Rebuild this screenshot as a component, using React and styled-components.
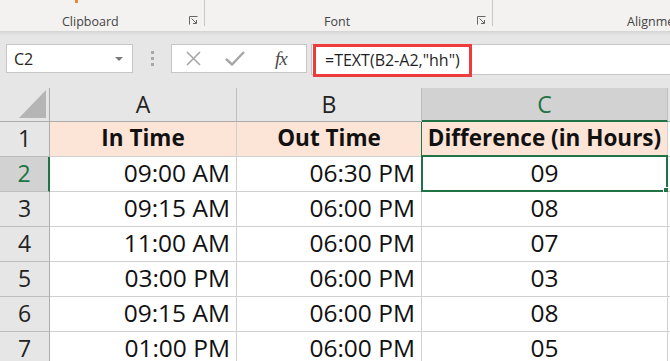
import { styled, createGlobalStyle } from "styled-components";

const GlobalStyle = createGlobalStyle`
    html, body {
        margin: 0;
        padding: 0;
        background: #ffffff;
        font-family: "Open Sans", "Noto Sans", sans-serif;
    }
`

const Screen = styled.div`
    width: 670px;
    height: 361px;
    overflow: hidden;
    display: flex;
    flex-direction: column;
    background: #e6e6e6;
`

const Ribbon = styled.div`
    display: flex;
    height: 32px;
    flex-shrink: 0;
    background: #f3f2f1;
    border-bottom: 1px solid #d6d6d6;
    box-sizing: border-box;
`

const Group = styled.div`
    position: relative;
    display: flex;
    align-items: flex-end;
    width: ${props => props.$width}px;
    padding-left: ${props => props.$labelAt}px;
    padding-bottom: 1px;
    box-sizing: border-box;
    flex-shrink: 0;

    &::after {
        content: "";
        display: ${props => (props.$last ? "none" : "block")};
        position: absolute;
        right: 0;
        top: 0;
        width: 1px;
        height: 26px;
        background: #c8c8c8;
    }
`

const GroupLabel = styled.span`
    font-size: 12.5px;
    color: #444444;
    line-height: 16px;
`

const Launcher = styled.svg`
    position: absolute;
    right: 7px;
    bottom: 6px;
`

const PasteTip = styled.div`
    position: absolute;
    left: 75px;
    top: 0;
    width: 3px;
    height: 3px;
    background: #e8883a;
`

const FormulaArea = styled.div`
    display: flex;
    align-items: flex-start;
    height: 56px;
    flex-shrink: 0;
    padding: 12px 0 0 6px;
    box-sizing: border-box;
    background: linear-gradient(#dadada 0, #e6e6e6 4px, #e6e6e6 100%);
`

const NameBox = styled.div`
    display: flex;
    align-items: center;
    justify-content: space-between;
    width: 127px;
    height: 29px;
    padding: 0 9px 0 7px;
    box-sizing: border-box;
    background: #ffffff;
    border: 1px solid #c6c6c6;
    font-size: 16px;
    color: #262626;
`

const Caret = styled.span`
    width: 0;
    height: 0;
    border-left: 4px solid transparent;
    border-right: 4px solid transparent;
    border-top: 4px solid #7a7a7a;
`

const Grip = styled.div`
    display: flex;
    flex-direction: column;
    gap: 3px;
    width: 38px;
    height: 29px;
    align-items: center;
    justify-content: center;

    span {
        width: 3px;
        height: 3px;
        background: #a8a8a8;
    }
`

const FxBox = styled.div`
    display: flex;
    align-items: center;
    width: 136px;
    height: 29px;
    box-sizing: border-box;
    background: #ffffff;
    border: 1px solid #c6c6c6;
    padding-left: 14px;
    gap: 24px;
`

const Fx = styled.span`
    font-family: "Liberation Serif", "DejaVu Serif", serif;
    font-style: italic;
    font-size: 19px;
    color: #4a4a4a;
    margin-left: 6px;
    letter-spacing: -1px;
`

const FormulaInput = styled.div`
    position: relative;
    flex: 1;
    height: 29px;
    margin-left: 4px;
    background: #ffffff;
    border: 1px solid #c6c6c6;
    border-right: none;
    display: flex;
    align-items: center;
    padding-left: 13px;
    font-size: 16px;
    color: #1f1f1f;
`

const Highlight = styled.div`
    position: absolute;
    left: 1px;
    top: -1px;
    width: 159px;
    height: 33px;
    border: 3px solid #ee3b3b;
    box-sizing: border-box;
`

const Sheet = styled.div`
    display: grid;
    grid-template-columns: 50px 187px 185px 246px 1fr;
    grid-template-rows: 34px;
    grid-auto-rows: 35px;
    background: #ffffff;
`

const Cell = styled.div`
    position: relative;
    display: flex;
    align-items: center;
    justify-content: ${props => props.$align || "flex-end"};
    padding: 0 6px 3px 6px;
    box-sizing: border-box;
    border-right: 1px solid ${props => props.$rightColor || "#d0d0d0"};
    border-bottom: 1px solid #d0d0d0;
    font-size: ${props => (props.$bold ? "22.5px" : "24.5px")};
    font-weight: ${props => (props.$bold ? 700 : 400)};
    color: #111111;
    background: ${props => props.$fill || "#ffffff"};
    white-space: nowrap;
`

const HeaderCell = styled.div`
    display: flex;
    align-items: center;
    justify-content: center;
    padding-bottom: 1px;
    box-sizing: border-box;
    font-size: 23px;
    background: ${props => (props.$active ? "#d2d2d2" : "#e6e6e6")};
    color: ${props => (props.$active ? "#217346" : "#222222")};
    border-right: 1px solid #bdbdbd;
    border-bottom: ${props => (props.$active ? "2px solid #217346" : "1px solid #ababab")};
`

const RowHead = styled.div`
    display: flex;
    align-items: center;
    justify-content: center;
    padding-bottom: 3px;
    box-sizing: border-box;
    font-size: 23px;
    background: ${props => (props.$active ? "#d2d2d2" : "#e6e6e6")};
    color: ${props => (props.$active ? "#217346" : "#222222")};
    border-bottom: 1px solid #bdbdbd;
    border-right: ${props => (props.$active ? "2px solid #217346" : "1px solid #ababab")};
`

const Corner = styled.div`
    display: flex;
    align-items: flex-end;
    justify-content: flex-end;
    padding: 0 3px 3px 0;
    box-sizing: border-box;
    background: #e6e6e6;
    border-right: 1px solid #ababab;
    border-bottom: 1px solid #ababab;
`

const Selection = styled.div`
    position: absolute;
    top: -2px;
    left: -1px;
    right: -1px;
    bottom: -1px;
    border: 2px solid #217346;
    pointer-events: none;
`

const FillHandle = styled.div`
    position: absolute;
    right: -4px;
    bottom: -4px;
    width: 5px;
    height: 5px;
    background: #217346;
    border: 1px solid #ffffff;
`

const headers = ["In Time", "Out Time", "Difference (in Hours)"];

const rows = [
    ["09:00 AM", "06:30 PM", "09"],
    ["09:15 AM", "06:00 PM", "08"],
    ["11:00 AM", "06:00 PM", "07"],
    ["03:00 PM", "06:00 PM", "03"],
    ["09:15 AM", "06:00 PM", "08"],
    ["01:00 PM", "06:00 PM", "05"],
];

const LauncherIcon = () => (
    <Launcher width="9" height="9" viewBox="0 0 9 9">
        <path d="M0.5 8.5V0.5H8.5" fill="none" stroke="#666" strokeWidth="1" />
        <path d="M2.5 2.5L7.5 7.5M4 7.5H7.5V4" fill="none" stroke="#666" strokeWidth="1" />
    </Launcher>
)

const Row = ({ index, values }) => {
    const selected = index === 2;
    return (
        <>
            <RowHead $active={selected}>{index}</RowHead>
            <Cell>{values[0]}</Cell>
            <Cell>{values[1]}</Cell>
            <Cell $align="center">
                {values[2]}
                {selected && (
                    <Selection>
                        <FillHandle />
                    </Selection>
                )}
            </Cell>
            <Cell />
        </>
    )
}

const App = () => {
    return (
        <Screen>
            <GlobalStyle />
            <Ribbon>
                <Group $width={205} $labelAt={62}>
                    <PasteTip />
                    <GroupLabel>Clipboard</GroupLabel>
                    <LauncherIcon />
                </Group>
                <Group $width={288} $labelAt={119}>
                    <GroupLabel>Font</GroupLabel>
                    <LauncherIcon />
                </Group>
                <Group $width={177} $labelAt={134} $last>
                    <GroupLabel>Alignment</GroupLabel>
                </Group>
            </Ribbon>

            <FormulaArea>
                <NameBox>
                    C2
                    <Caret />
                </NameBox>
                <Grip>
                    <span />
                    <span />
                    <span />
                </Grip>
                <FxBox>
                    <svg width="15" height="15" viewBox="0 0 15 15">
                        <path d="M1 1L14 14M14 1L1 14" stroke="#a6a6a6" strokeWidth="1.6" />
                    </svg>
                    <svg width="20" height="15" viewBox="0 0 20 15">
                        <path d="M1 8L7 13.5L19 1" fill="none" stroke="#a6a6a6" strokeWidth="2.4" />
                    </svg>
                    <Fx>fx</Fx>
                </FxBox>
                <FormulaInput>
                    <Highlight />
                    =TEXT(B2-A2,"hh")
                </FormulaInput>
            </FormulaArea>

            <Sheet>
                <Corner>
                    <svg width="27" height="28" viewBox="0 0 27 28">
                        <path d="M27 0V28H0Z" fill="#b5b5b5" />
                    </svg>
                </Corner>
                <HeaderCell>A</HeaderCell>
                <HeaderCell>B</HeaderCell>
                <HeaderCell $active>C</HeaderCell>
                <HeaderCell />

                <RowHead>1</RowHead>
                {headers.map((h, i) => (
                    <Cell
                        key={h}
                        $bold
                        $align="center"
                        $fill="#fce4d6"
                        $rightColor={i === 1 ? "#217346" : "#d0d0d0"}
                    >
                        {h}
                    </Cell>
                ))}
                <Cell />

                {rows.map((r, i) => (
                    <Row key={i} index={i + 2} values={r} />
                ))}
            </Sheet>
        </Screen>
    )
}

export default App;
